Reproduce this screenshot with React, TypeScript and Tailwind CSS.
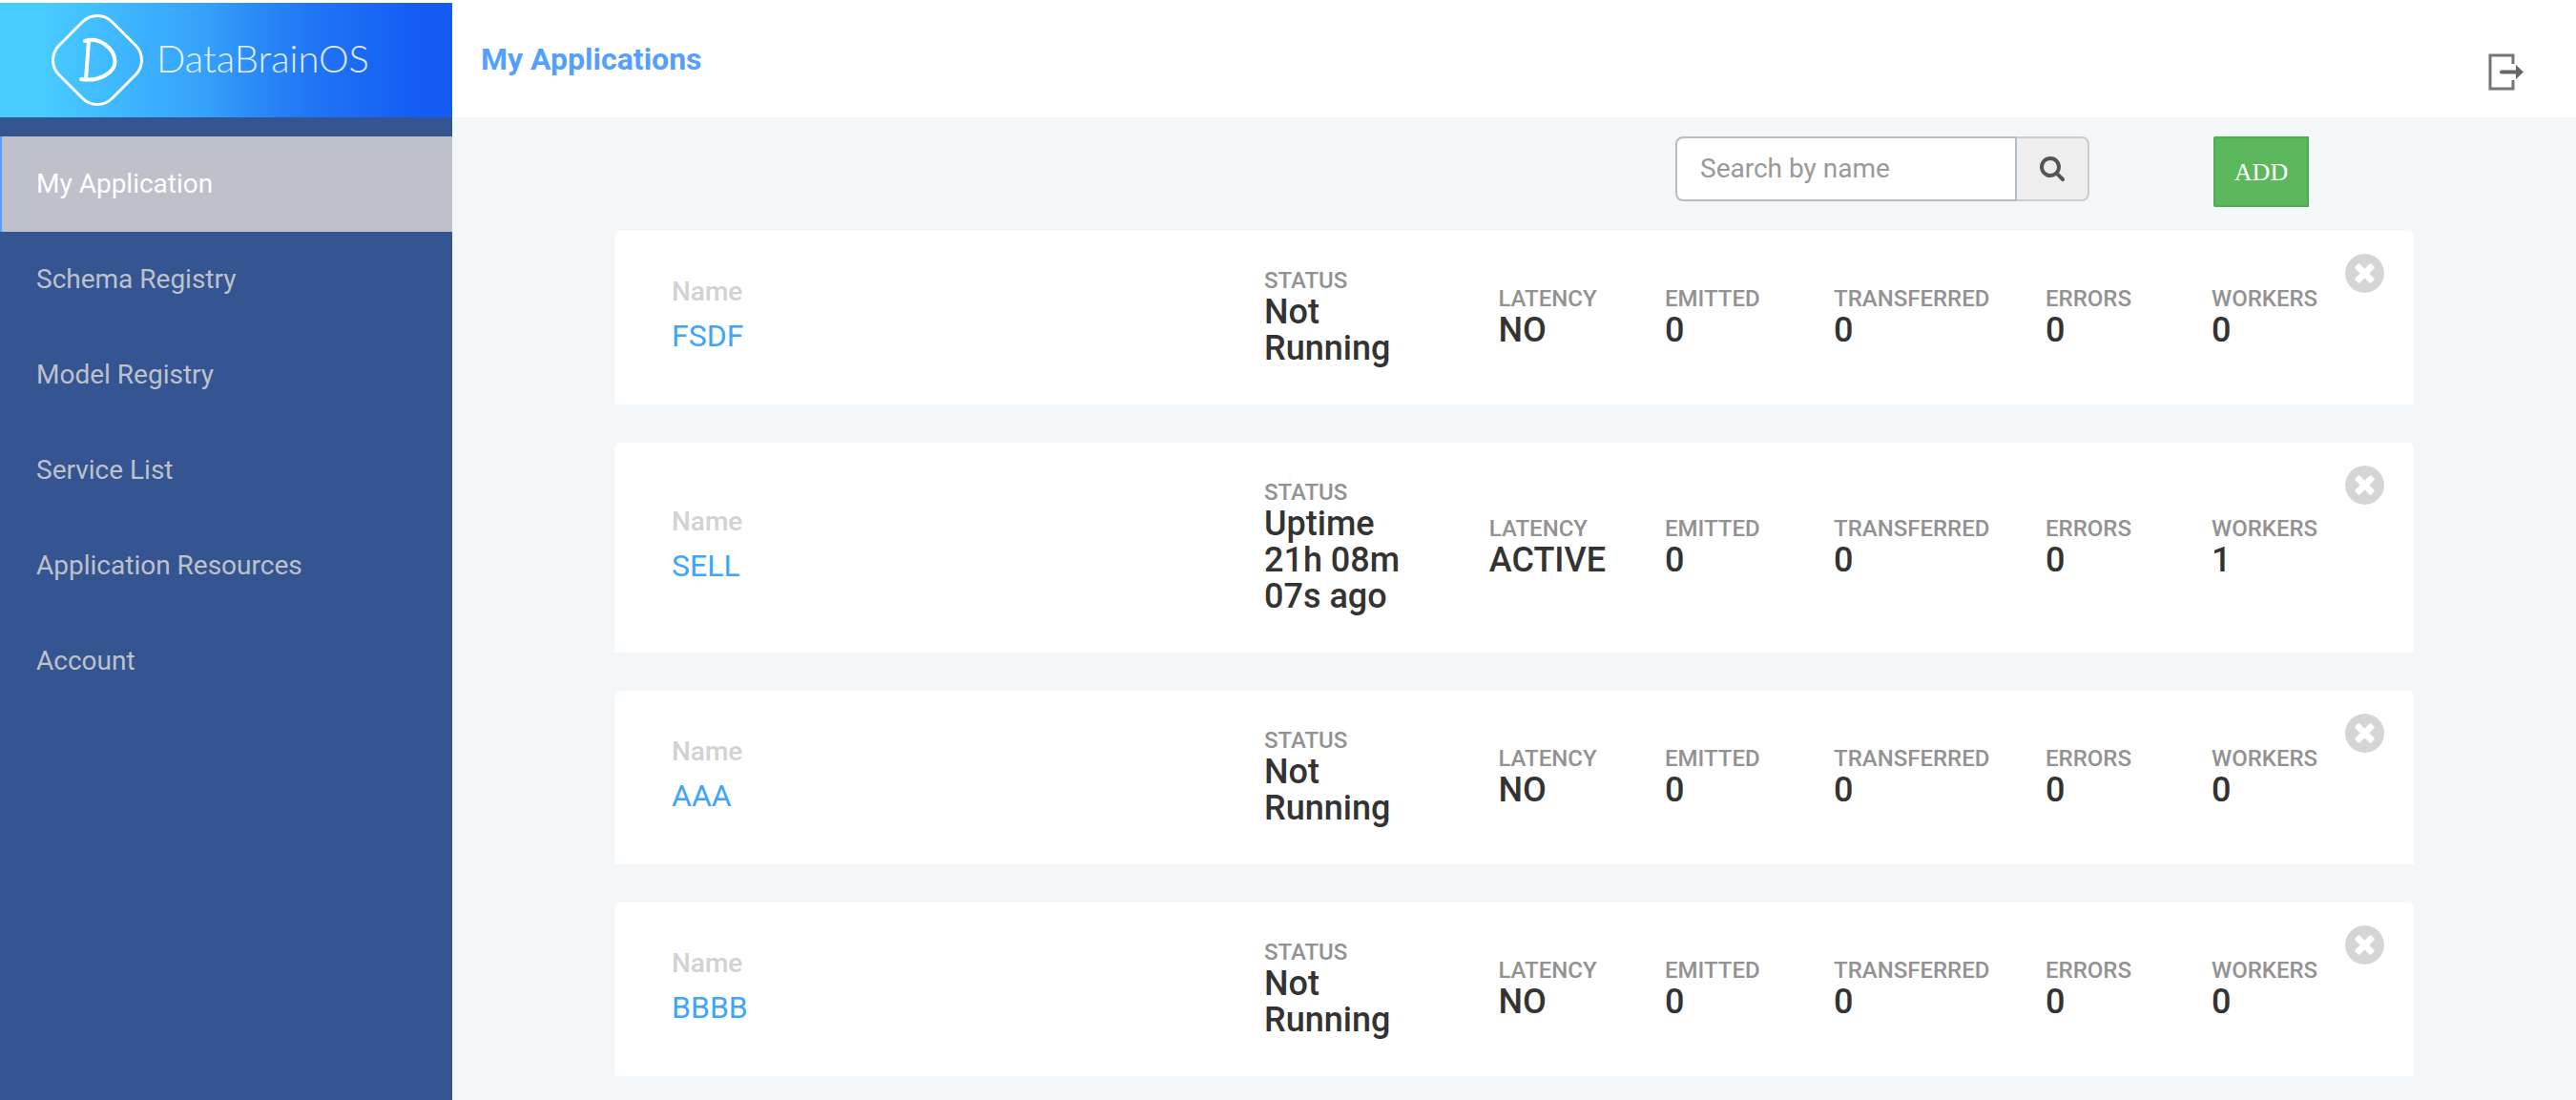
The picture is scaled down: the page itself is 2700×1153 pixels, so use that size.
import React from "react";

const navItems = [
  "My Application",
  "Schema Registry",
  "Model Registry",
  "Service List",
  "Application Resources",
  "Account",
];

type AppRow = {
  name: string;
  status: string;
  latency: string;
  emitted: number;
  transferred: number;
  errors: number;
  workers: number;
};

const apps: AppRow[] = [
  { name: "FSDF", status: "Not Running", latency: "NO", emitted: 0, transferred: 0, errors: 0, workers: 0 },
  { name: "SELL", status: "Uptime 21h 08m 07s ago", latency: "ACTIVE", emitted: 0, transferred: 0, errors: 0, workers: 1 },
  { name: "AAA", status: "Not Running", latency: "NO", emitted: 0, transferred: 0, errors: 0, workers: 0 },
  { name: "BBBB", status: "Not Running", latency: "NO", emitted: 0, transferred: 0, errors: 0, workers: 0 },
];

function Logo() {
  return (
    <svg viewBox="0 0 100 100" className="h-[100px] w-[100px]" fill="none" stroke="white" aria-hidden="true">
      <rect x="10.700" y="10.700" width="78.600" height="78.600" rx="22" strokeWidth="3" transform="rotate(45 50 50)" />
      <path d="M37 30 C 52 25 68 38 68.500 51 C 69 63 52 73 33 70 M41 30 L38 70" strokeWidth="4" strokeLinecap="round" strokeLinejoin="round" />
    </svg>
  );
}

function ExitIcon() {
  return (
    <svg viewBox="0 0 38 40" className="h-10 w-[38px]" fill="none" stroke="#757575" aria-hidden="true">
      <path d="M26 11V2H2V37H26V28" strokeWidth="3" />
      <path d="M14 19.500H31" strokeWidth="4" stroke="#666" strokeLinecap="round" />
      <path d="M29 12L37 19.500L29 27Z" fill="#666" stroke="none" />
    </svg>
  );
}

function SearchIcon() {
  return (
    <svg viewBox="0 0 1664 1664" className="h-[26px] w-[26px]" fill="#555" aria-hidden="true">
      <path d="M1152 704q0-185-131.500-316.500T704 256 387.500 387.500 256 704t131.500 316.500T704 1152t316.500-131.500T1152 704zm512 832q0 52-38 90t-90 38q-54 0-90-38l-343-342q-179 124-399 124-143 0-273.500-55.500t-225-150-150-225T0 704t55.500-273.500 150-225 225-150T704 0t273.500 55.500 225 150 150 225T1408 704q0 220-124 399l343 343q37 37 37 90z" />
    </svg>
  );
}

function RemoveIcon() {
  return (
    <svg viewBox="0 0 1536 1536" className="h-[41px] w-[41px]" fill="#d5d5d5" aria-hidden="true">
      <path d="M1149 994q0-26-19-45L949 768l181-181q19-19 19-45 0-27-19-46l-90-90q-19-19-46-19-26 0-45 19L768 587 587 406q-19-19-45-19-27 0-46 19l-90 90q-19 19-19 46 0 26 19 45l181 181-181 181q-19 19-19 45 0 27 19 46l90 90q19 19 46 19 26 0 45-19l181-181 181 181q19 19 45 19 27 0 46-19l90-90q19-19 19-46zm387-226q0 209-103 385.500T1153.500 1433 768 1536t-385.500-103T103 1153.500 0 768t103-385.500T382.500 103 768 0t385.500 103T1433 382.500 1536 768z" />
    </svg>
  );
}

function Metric({ label, value, className = "" }: { label: string; value: React.ReactNode; className?: string }) {
  return (
    <div className={className}>
      <dt className="text-2xl leading-7 font-medium text-[#929292]">{label}</dt>
      <dd className="text-4xl leading-[38px] font-medium text-[#333]">{value}</dd>
    </div>
  );
}

function AppCard({ app }: { app: AppRow }) {
  return (
    <li className="relative flex items-center rounded-t-md bg-white pt-[38px] pb-10 pl-15">
      <div className="min-w-0 flex-1">
        <p className="text-[28px] leading-10 font-medium text-[#d2d2d2]">Name</p>
        <a href="#" className="text-[32px] leading-[52px] text-[#3ea5fb]">{app.name}</a>
      </div>
      <dl className="grid w-[1205px] grid-cols-[174px_246px_177px_222px_174px_1fr] items-center">
        <Metric label="STATUS" value={app.status} className="w-[150px]" />
        <Metric label="LATENCY" value={app.latency} className="justify-self-center" />
        <Metric label="EMITTED" value={app.emitted} />
        <Metric label="TRANSFERRED" value={app.transferred} />
        <Metric label="ERRORS" value={app.errors} />
        <Metric label="WORKERS" value={app.workers} />
      </dl>
      <button type="button" aria-label={"Remove " + app.name} className="absolute top-6 right-[31px]">
        <RemoveIcon />
      </button>
    </li>
  );
}

export default function App() {
  return (
    <div className="flex min-h-screen bg-[#f3f7fa] font-['Roboto',sans-serif]">
      <aside className="flex w-[474px] shrink-0 flex-col border-t-[3px] border-white bg-[#345591]">
        <a
          href="#"
          className="flex h-[120px] items-center bg-[linear-gradient(90deg,#48cbff_10%,#3cb0fe_32%,#35a2fb_45%,#2a89f6_57%,#1f74f5_70%,#155cf3_92%)] pl-[52px] text-white"
        >
          <Logo />
          <span className="pb-1 pl-3 font-['Lato',sans-serif] text-[40px] font-light text-white/85">DataBrainOS</span>
        </a>
        <nav className="flex flex-col pt-5">
          {navItems.map((item, i) => (
            <a
              key={item}
              href="#"
              aria-current={i === 0 ? "page" : undefined}
              className={
                i === 0
                  ? "flex h-[100px] items-center border-l-2 border-[#579fff] bg-[#bec1ca] pl-9 text-[28px] text-white"
                  : "flex h-[100px] items-center pl-[38px] text-[28px] text-[#bec1ca]"
              }
            >
              {item}
            </a>
          ))}
        </nav>
      </aside>

      <div className="flex min-w-0 flex-1 flex-col">
        <header className="flex h-[123px] items-center justify-between bg-white pr-[54px] pl-[30px]">
          <h1 className="text-[32px] font-bold text-[#549fff]">My Applications</h1>
          <button type="button" aria-label="Log out" className="mt-7">
            <ExitIcon />
          </button>
        </header>

        <main className="px-[170px] pt-5">
          <div className="flex items-start justify-end pr-[110px]">
            <form role="search" className="flex h-[68px] w-[434px]">
              <input
                type="text"
                aria-label="Search by name"
                placeholder="Search by name"
                className="min-w-0 flex-1 rounded-l-lg border-2 border-[#b4bcc8] bg-white px-6 text-[28px] text-[#555] placeholder:text-[#999]"
              />
              <button
                type="button"
                aria-label="Search"
                className="flex w-[76px] items-center justify-center rounded-r-lg border-2 border-l-0 border-[#ccc] bg-[#eee]"
              >
                <SearchIcon />
              </button>
            </form>
            <button
              type="button"
              className="ml-[130px] h-[74px] w-[100px] rounded-l-xs border-2 border-[#4cae4c] bg-[#5cb85c] font-['Liberation_Serif',serif] text-[26px] text-white"
            >
              ADD
            </button>
          </div>

          <ul className="mt-[25px] flex flex-col gap-10">
            {apps.map((app) => (
              <AppCard key={app.name} app={app} />
            ))}
          </ul>
        </main>
      </div>
    </div>
  );
}
